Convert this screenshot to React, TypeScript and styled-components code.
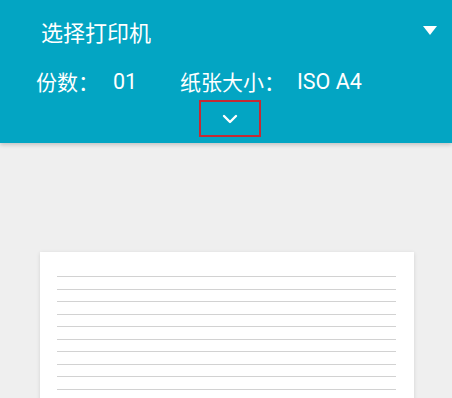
import React from "react";
import styled, { createGlobalStyle } from "styled-components";

const Global = createGlobalStyle`
  html, body { margin: 0; padding: 0; background: #efefef; overflow: hidden; }
  body { font-family: Roboto, "Noto Sans CJK SC", sans-serif; }
`;

const Page = styled.div`
  width: 452px;
  height: 398px;
  background: #efefef;
  overflow: hidden;
  display: flex;
  flex-direction: column;
`;

const Header = styled.header`
  height: 143px;
  background: #03a5c3;
  box-shadow: 0 2px 4px rgba(0, 0, 0, 0.18);
  display: flex;
  flex-direction: column;
  color: #fff;
  position: relative;
  z-index: 1;
  flex-shrink: 0;
`;

const TitleRow = styled.div`
  height: 60px;
  display: flex;
  align-items: center;
  justify-content: space-between;
  padding: 0 15px 0 41px;
  box-sizing: border-box;
  margin-top: 4px;
`;

const Title = styled.div`
  font-size: 22px;
  line-height: 24px;
  font-family: "Noto Sans CJK SC", Roboto, sans-serif;
  margin-top: -6px;
`;

const Triangle = styled.div`
  width: 0;
  height: 0;
  border-left: 7.5px solid transparent;
  border-right: 7.5px solid transparent;
  border-top: 9px solid #fff;
  margin-top: -7px;
`;

const InfoRow = styled.div`
  display: flex;
  align-items: center;
  height: 30px;
  margin-top: 2px;
  padding-left: 36px;
`;

const Label = styled.span<{ $w: number }>`
  width: ${(p) => p.$w}px;
  font-family: "Noto Sans CJK SC", Roboto, sans-serif;
  font-size: 21px;
`;

const Value = styled.span<{ $w: number }>`
  width: ${(p) => p.$w}px;
  font-family: Roboto, sans-serif;
  font-size: 21.5px;
`;

const ChevronRow = styled.div`
  display: flex;
  margin-top: 4px;
  padding-left: 199px;
`;

const ChevronBox = styled.div`
  width: 62px;
  height: 37px;
  border: 2px solid #c62a33;
  box-sizing: border-box;
  display: flex;
  align-items: center;
  justify-content: center;
`;

const Body = styled.main`
  flex: 1;
  padding: 109px 38px 0 40px;
`;

const Paper = styled.div`
  background: #fff;
  height: 300px;
  box-shadow: 0 1px 4px rgba(0, 0, 0, 0.12);
  padding: 24px 18px 0 17px;
  display: flex;
  flex-direction: column;
  gap: 11.5px;
`;

const Rule = styled.div`
  height: 1px;
  background: #d2d2d2;
`;

export default function App() {
  return (
    <>
      <Global />
      <Page>
        <Header>
          <TitleRow>
            <Title>选择打印机</Title>
            <Triangle />
          </TitleRow>
          <InfoRow>
            <Label $w={77}>份数：</Label>
            <Value $w={67}>01</Value>
            <Label $w={117}>纸张大小：</Label>
            <Value $w={80}>ISO A4</Value>
          </InfoRow>
          <ChevronRow>
            <ChevronBox>
              <svg width="16" height="10" viewBox="0 0 16 10">
                <path d="M2 2 L8 8 L14 2" stroke="#fff" strokeWidth="2.4" fill="none" strokeLinecap="round" strokeLinejoin="round" />
              </svg>
            </ChevronBox>
          </ChevronRow>
        </Header>
        <Body>
          <Paper>
            {Array.from({ length: 12 }).map((_, i) => (
              <Rule key={i} />
            ))}
          </Paper>
        </Body>
      </Page>
    </>
  );
}
